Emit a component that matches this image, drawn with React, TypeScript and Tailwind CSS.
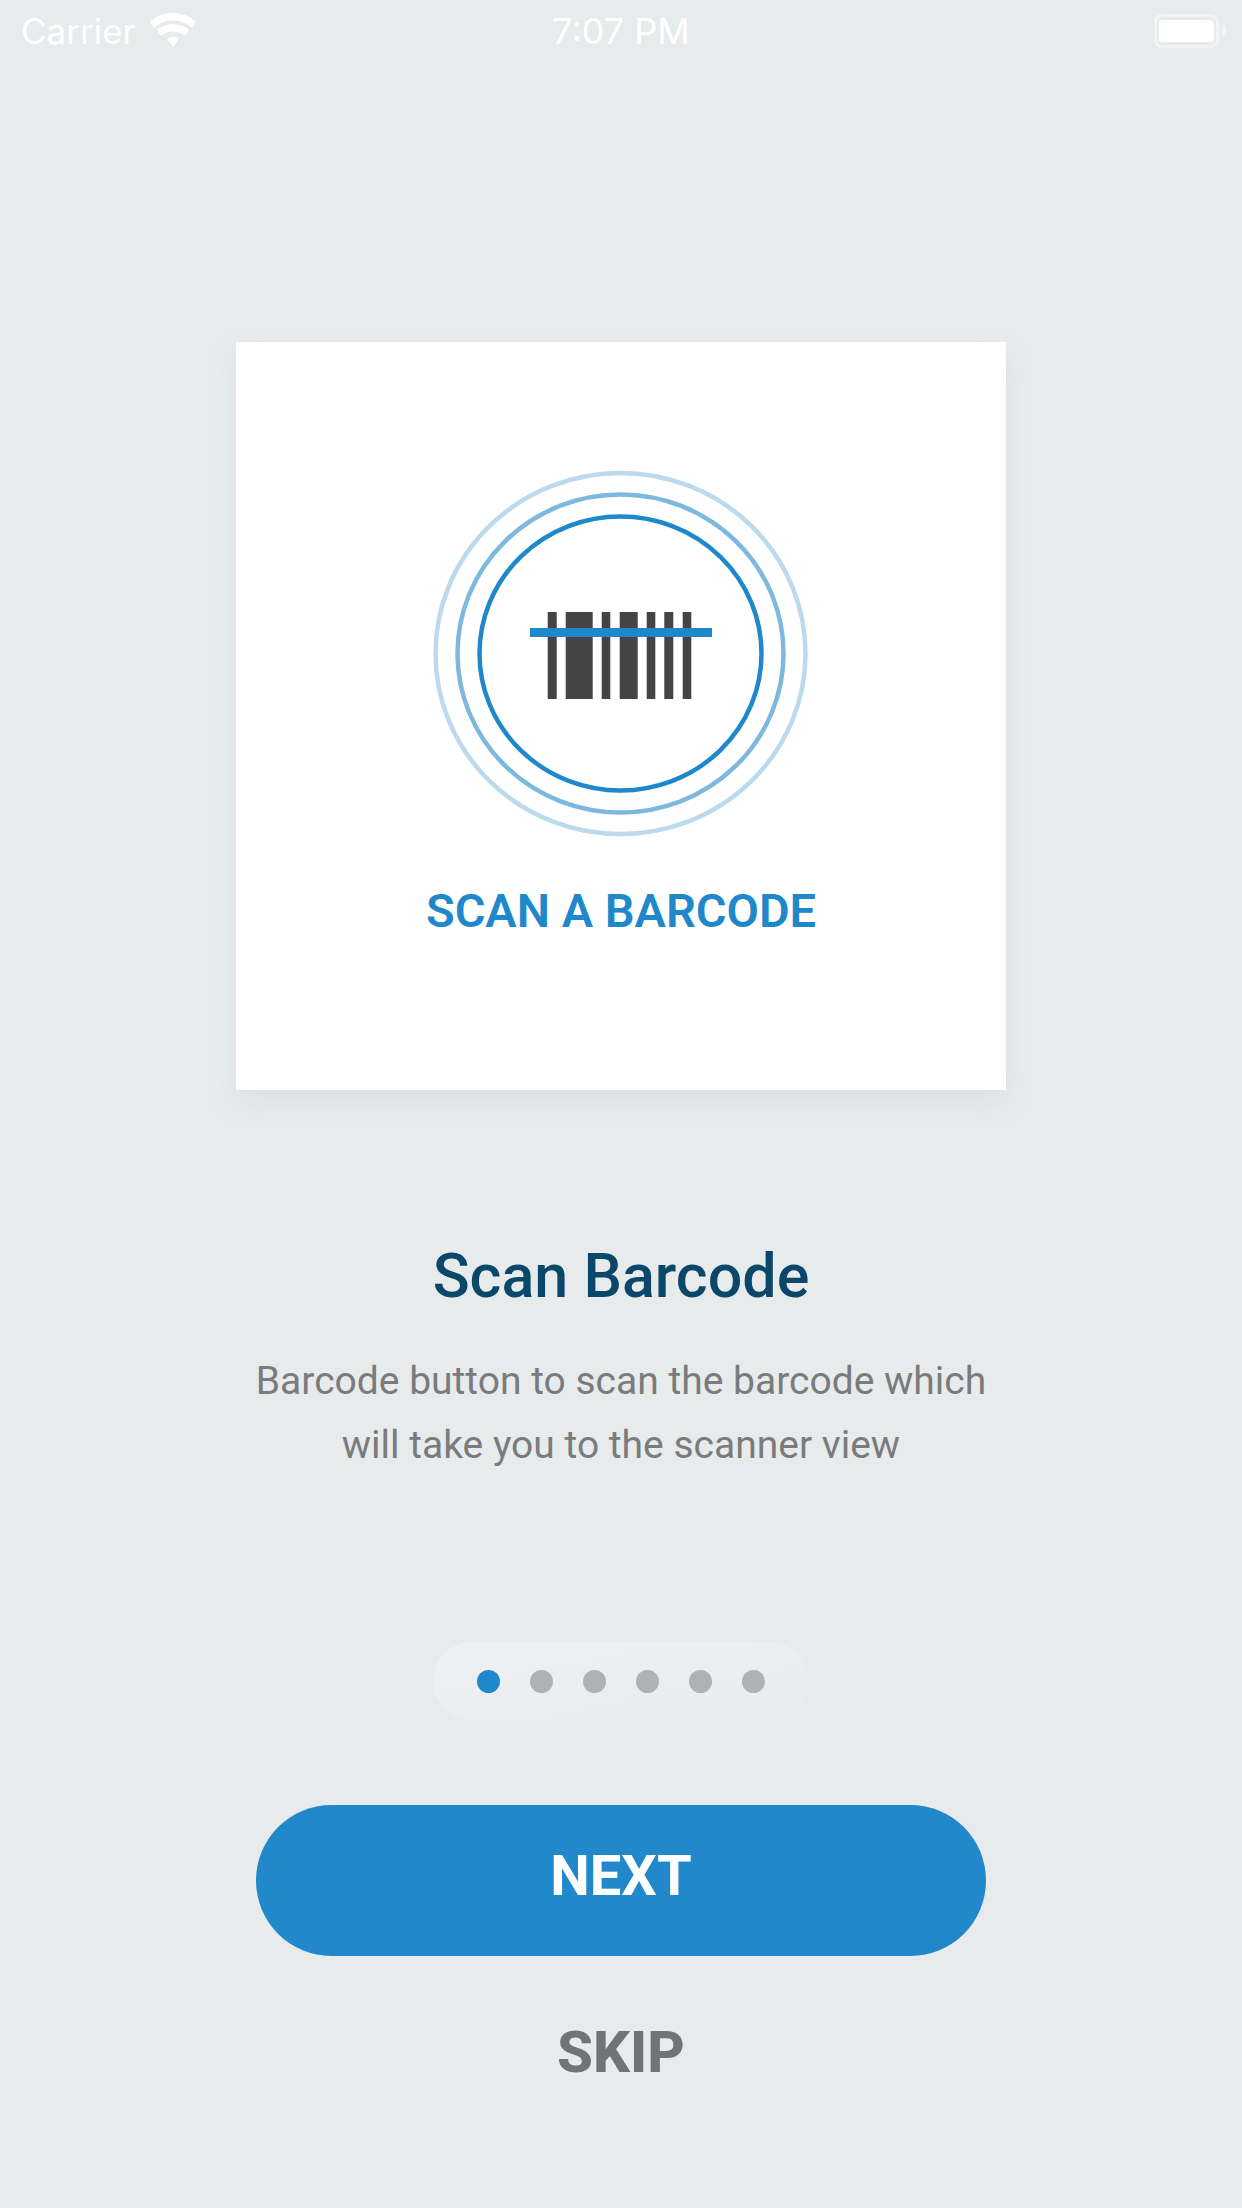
export default function App() {
  const bars: [number, number][] = [[547.7, 9], [565.7, 27], [601.7, 8.6], [619.7, 18], [646.7, 8.6], [664.3, 9], [682.7, 8.6]];
  return (
    <div className="w-[1242px] h-[2208px] bg-[#e7ebec] flex flex-col items-center overflow-hidden font-['Roboto',sans-serif]">
      <div className="w-full h-[62px] shrink-0 relative flex items-center justify-between pl-[21px] pr-[16px] text-white text-[36px] font-['Inter',sans-serif]">
        <div className="flex items-center gap-[14px]">
          <span className="font-normal text-[35px]">Carrier</span>
          <svg className="mt-[-2px]" width="46" height="34" viewBox="0 0 46 34" fill="white">
            <path d="M4 15 L0 9 C12 -3 34 -3 46 9 L42 15 C31 5 15 5 4 15Z" />
            <path d="M11 23 L7 17 C16 9 30 9 39 17 L35 23 C28 17 18 17 11 23Z" />
            <path d="M23 34 L17 26 C21 23 25 23 29 26Z" />
          </svg>
        </div>
        <span className="absolute left-0 right-0 text-center font-normal">7:07 PM</span>
        <div className="flex items-center gap-[3px]">
          <div className="w-[65px] h-[34px] rounded-[8px] border-[3px] border-[#f1f4f4] px-[2px] py-[3px]">
            <div className="w-full h-full bg-white rounded-[3px]" />
          </div>
          <div className="w-[4px] h-[12px] bg-[#f1f4f4] rounded-r-full" />
        </div>
      </div>

      <div className="mt-[280px] w-[770px] h-[748px] shrink-0 bg-white shadow-[0_12px_24px_rgba(190,200,225,0.28)] flex flex-col items-center">
        <svg className="mt-[111px] shrink-0" width="400" height="400" viewBox="421 453 400 400">
          <ellipse cx="620.5" cy="653.5" rx="185" ry="180.5" fill="none" stroke="#bcdaee" strokeWidth="4.5" />
          <ellipse cx="620.5" cy="653.5" rx="163" ry="159" fill="none" stroke="#7db8de" strokeWidth="4.5" />
          <ellipse cx="620.5" cy="653.5" rx="141" ry="137" fill="none" stroke="#1f88cb" strokeWidth="4.5" />
          {bars.map(([x, w]) => (
            <rect key={x} x={x} y="612" width={w} height="87" fill="#444444" />
          ))}
          <rect x="530" y="628" width="182" height="9" fill="#1f88cb" />
        </svg>
        <div className="mt-[31px] text-[47px] leading-[54px] font-semibold text-[#1f88cb]">SCAN A BARCODE</div>
      </div>

      <h1 className="mt-[154px] text-[61px] leading-[64px] font-medium text-[#0b4769]">Scan Barcode</h1>
      <p className="mt-[41px] w-[800px] text-center text-[39px] leading-[64px] text-[#7a7b7d]">
        Barcode button to scan the barcode which<br />will take you to the scanner view
      </p>

      <div className="mt-[165px] w-[376px] h-[78px] shrink-0 rounded-full bg-gradient-to-br from-[#eef1f1] to-[#e9eced] flex items-center justify-center gap-[30px]">
        <div className="w-[23px] h-[23px] rounded-full bg-[#1f88cb]" />
        <div className="w-[23px] h-[23px] rounded-full bg-[#afb1b2]" />
        <div className="w-[23px] h-[23px] rounded-full bg-[#afb1b2]" />
        <div className="w-[23px] h-[23px] rounded-full bg-[#afb1b2]" />
        <div className="w-[23px] h-[23px] rounded-full bg-[#afb1b2]" />
        <div className="w-[23px] h-[23px] rounded-full bg-[#afb1b2]" />
      </div>

      <button className="mt-[85px] w-[730px] h-[151px] shrink-0 rounded-full bg-[#2188cb] text-white text-[56px] leading-[64px] font-bold pb-[10px]">NEXT</button>
      <div className="mt-[64px] text-[58px] leading-[64px] font-extrabold text-[#727374]">SKIP</div>
    </div>
  );
}
